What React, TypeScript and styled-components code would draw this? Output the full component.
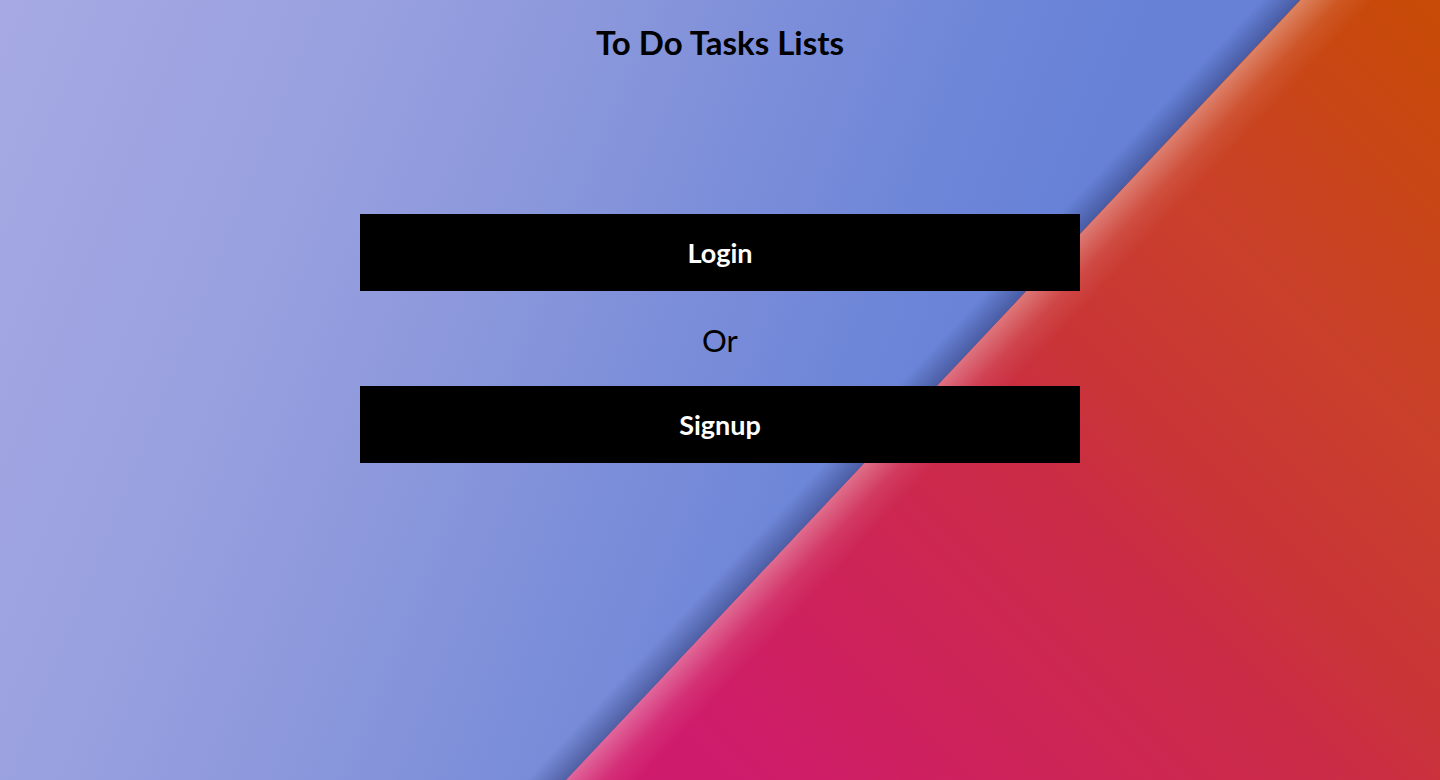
import React from "react";
import styled, { createGlobalStyle } from "styled-components";

const GlobalStyle = createGlobalStyle`
  html, body {
    margin: 0;
    padding: 0;
  }
  body {
    font-family: "Lato", "Open Sans", sans-serif;
    overflow: hidden;
  }
`;

// the diagonal runs from (1300,0) to (566,780): 133.3deg, cut at 947px
const Page = styled.div`
  display: grid;
  min-height: 100vh;
  width: 100%;
  background:
    linear-gradient(133.3deg, transparent 918px, rgba(35, 45, 100, 0.45) 947px, transparent 948px),
    linear-gradient(112deg, #a6a9e3 0%, #9aa1e0 20%, #8a97db 35%, #7a8dd9 47%, #6e86d8 57%, #6681d6 66%, #6580d6 100%);
`;

const Wallpaper = styled.div`
  grid-area: 1 / 1;
  clip-path: polygon(1300px 0, 100% 0, 100% 100%, 566px 100%);
  background:
    linear-gradient(133.3deg, transparent 946px, rgba(255, 235, 235, 0.36) 947px, rgba(255, 220, 220, 0.1) 975px, transparent 1000px),
    linear-gradient(45deg, #d0186f 0%, #cf1b6c 33%, #cb2c45 61%, #c93438 67%, #c9402a 80%, #c84b05 100%);
`;

const Content = styled.main`
  grid-area: 1 / 1;
  display: flex;
  flex-direction: column;
  align-items: center;
  z-index: 1;
`;

const Title = styled.h1`
  margin: 21px 0 0;
  font-size: 33px;
  line-height: 43px;
  font-weight: 700;
  color: #000;
`;

const ActionButton = styled.button`
  width: 720px;
  height: 77px;
  border: none;
  background: #000;
  color: #fff;
  font-family: "Lato", "Open Sans", sans-serif;
  font-size: 27px;
  font-weight: 700;
  cursor: pointer;
  margin-top: ${(p: { $top?: number }) => p.$top ?? 0}px;
`;

const Separator = styled.div`
  box-sizing: border-box;
  height: 95px;
  padding-top: 4px;
  line-height: 91px;
  font-size: 31px;
  color: #000;
`;

const App = () => {
  return (
    <>
      <GlobalStyle />
      <Page>
        <Wallpaper />
        <Content>
          <Title>To Do Tasks Lists</Title>
          <ActionButton $top={150}>Login</ActionButton>
          <Separator>Or</Separator>
          <ActionButton>Signup</ActionButton>
        </Content>
      </Page>
    </>
  );
};

export default App;
